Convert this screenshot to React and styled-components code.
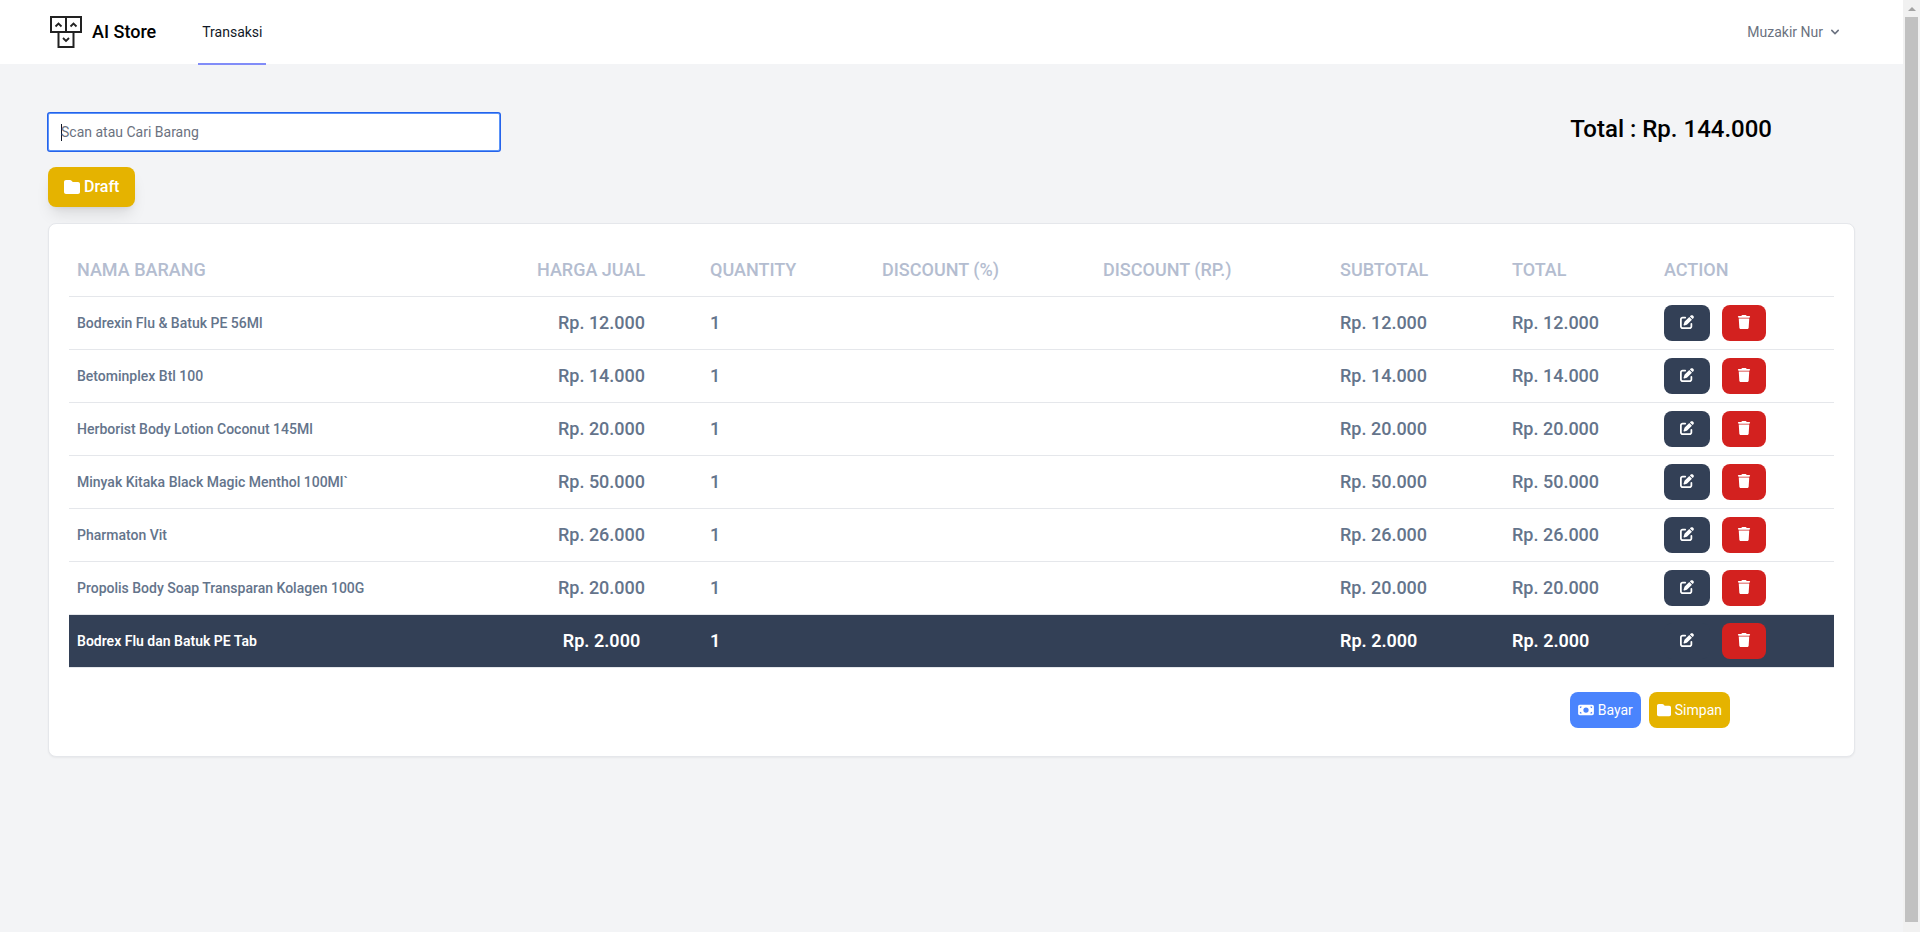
import React, { useState } from "react";
import styled, { createGlobalStyle, css } from "styled-components";
import { FaFolder, FaMoneyBill, FaPenToSquare, FaTrash } from "react-icons/fa6";

const items = [
  { name: "Bodrexin Flu & Batuk PE 56Ml", price: "12.000", qty: 1 },
  { name: "Betominplex Btl 100", price: "14.000", qty: 1 },
  { name: "Herborist Body Lotion Coconut 145Ml", price: "20.000", qty: 1 },
  { name: "Minyak Kitaka Black Magic Menthol 100Ml`", price: "50.000", qty: 1 },
  { name: "Pharmaton Vit", price: "26.000", qty: 1 },
  { name: "Propolis Body Soap Transparan Kolagen 100G", price: "20.000", qty: 1 },
  { name: "Bodrex Flu dan Batuk PE Tab", price: "2.000", qty: 1, active: true },
];

const columns = [
  { label: "Nama Barang", width: 460 },
  { label: "Harga Jual", width: 173 },
  { label: "Quantity", width: 172 },
  { label: "Discount (%)", width: 221 },
  { label: "Discount (Rp.)", width: 237 },
  { label: "Subtotal", width: 172 },
  { label: "Total", width: 152 },
  { label: "Action", width: 178 },
];

const Logo = () => (
  <svg width="36" height="36" viewBox="0 0 36 36" fill="none" stroke="#222" strokeWidth="2">
    <path d="M3 3h30v15H3zM18 3v15M10.5 18h15v15h-15z" />
    <path d="M7.5 12.5l3-3 3 3M22.5 12.5l3-3 3 3M15 24l3 3 3-3" strokeWidth="1.8" />
  </svg>
);

const Chevron = () => (
  <svg width="16" height="16" viewBox="0 0 20 20" fill="currentColor">
    <path
      fillRule="evenodd"
      d="M5.293 7.293a1 1 0 011.414 0L10 10.586l3.293-3.293a1 1 0 111.414 1.414l-4 4a1 1 0 01-1.414 0l-4-4a1 1 0 010-1.414z"
    />
  </svg>
);

const App = () => {
  const [keyword, setKeyword] = useState("");
  return (
    <Shell>
      <GlobalStyle />
      <Page>
        {/* navbar */}
        <Navbar>
          <Brand href="#">
            <Logo />
            AI Store
          </Brand>
          <NavLink href="#transaksi">Transaksi</NavLink>
          <UserButton type="button">
            Muzakir Nur
            <Chevron />
          </UserButton>
        </Navbar>
        <Main>
          {/* search and total */}
          <TopRow>
            <SearchInput
              type="text"
              aria-label="Scan atau Cari Barang"
              placeholder="Scan atau Cari Barang"
              value={keyword}
              onChange={(e) => setKeyword(e.target.value)}
              autoFocus
            />
            <GrandTotal>Total : Rp. 144.000</GrandTotal>
          </TopRow>
          <DraftButton type="button">
            <FaFolder />
            Draft
          </DraftButton>
          {/* cart */}
          <Card>
            <Table>
              <thead>
                <tr>
                  {columns.map((col) => (
                    <HeadCell key={col.label} $width={col.width}>
                      {col.label}
                    </HeadCell>
                  ))}
                </tr>
              </thead>
              <tbody>
                {items.map((item) => (
                  <Row key={item.name} $active={item.active}>
                    <NameCell>{item.name}</NameCell>
                    <PriceCell>Rp. {item.price}</PriceCell>
                    <Cell>{item.qty}</Cell>
                    <Cell />
                    <Cell />
                    <Cell>Rp. {item.price}</Cell>
                    <Cell>Rp. {item.price}</Cell>
                    <Cell>
                      <Actions>
                        <EditButton type="button" aria-label="Edit">
                          <FaPenToSquare />
                        </EditButton>
                        <DeleteButton type="button" aria-label="Hapus">
                          <FaTrash />
                        </DeleteButton>
                      </Actions>
                    </Cell>
                  </Row>
                ))}
              </tbody>
            </Table>
            <CardFooter>
              <FooterButton type="button" $color="#4a84fd">
                <MoneyIcon />
                Bayar
              </FooterButton>
              <FooterButton type="button" $color="#e5b300">
                <FaFolder />
                Simpan
              </FooterButton>
            </CardFooter>
          </Card>
        </Main>
      </Page>
      <ScrollTrack>
        <ScrollArrow />
        <ScrollThumb />
      </ScrollTrack>
    </Shell>
  );
};

const GlobalStyle = createGlobalStyle`
  * {
    box-sizing: border-box;
  }
  body {
    margin: 0;
    background: #f3f4f6;
    font-family: Roboto, "Liberation Sans", sans-serif;
    font-size: 14px;
    line-height: 20px;
  }
  button, input {
    font: inherit;
  }
  svg {
    display: block;
    flex-shrink: 0;
  }
`;
const Shell = styled.div`
  display: grid;
  grid-template-columns: minmax(0, 1fr) 17px;
  min-height: 100vh;
`;
const Page = styled.div`
  background: #f3f4f6;
`;
const Navbar = styled.nav`
  display: flex;
  align-items: center;
  height: 65px;
  padding: 0 48px;
  background: white;
  border-bottom: 1px solid #f3f4f6;
`;
const Brand = styled.a`
  display: flex;
  align-items: center;
  gap: 8px;
  color: black;
  font-size: 18px;
  font-weight: 500;
  text-decoration: none;
`;
const NavLink = styled.a`
  display: flex;
  align-items: center;
  height: 65px;
  margin: 0 0 -1px 42px;
  padding: 0 4px;
  border-bottom: 2px solid #818cf8;
  color: #111827;
  text-decoration: none;
`;
const UserButton = styled.button`
  display: flex;
  align-items: center;
  gap: 4px;
  margin-left: auto;
  padding: 8px 12px;
  border: none;
  background: white;
  color: #6b7280;
  cursor: pointer;
`;
const Main = styled.main`
  padding: 48px;
`;
const TopRow = styled.div`
  display: flex;
  justify-content: space-between;
  margin-bottom: 16px;
  padding-right: 83px;
`;
const SearchInput = styled.input`
  width: 452px;
  height: 38px;
  padding: 8px 12px;
  border: 1px solid #5b93f8;
  border-radius: 2px;
  outline: none;
  box-shadow: 0 0 0 1px #2563eb;
  background: white;
  color: #334155;
  &::placeholder {
    color: #6b7280;
    opacity: 1;
  }
  /* steady caret while the box is empty */
  &:focus:placeholder-shown {
    caret-color: transparent;
    background: linear-gradient(#111827, #111827) 12px center / 1px 17px no-repeat white;
  }
`;
const GrandTotal = styled.h1`
  margin: 0;
  font-size: 24px;
  font-weight: 500;
  line-height: 32px;
`;
const buttonBase = css`
  display: flex;
  align-items: center;
  border: none;
  border-radius: 8px;
  color: white;
  cursor: pointer;
`;
const DraftButton = styled.button`
  ${buttonBase}
  gap: 4px;
  height: 40px;
  padding: 0 16px;
  background: #e5b300;
  box-shadow: 0 10px 15px -3px rgba(0, 0, 0, 0.1), 0 4px 6px -4px rgba(0, 0, 0, 0.1);
  font-size: 16px;
  font-weight: 500;
`;
const Card = styled.section`
  margin-top: 16px;
  padding: 20px 20px 28px;
  border: 1px solid #e5e7eb;
  border-radius: 8px;
  background: white;
  box-shadow: 0 1px 2px rgba(0, 0, 0, 0.05);
`;
const Table = styled.table`
  width: 100%;
  table-layout: fixed;
  border-spacing: 0;
  color: #64748b;
  font-size: 18px;
  font-weight: 500;
`;
const HeadCell = styled.th`
  width: ${(props) => props.$width}px;
  height: 53px;
  padding: 0 8px;
  border-bottom: 1px solid #e5e7eb;
  color: #b4bdd0;
  font-weight: 500;
  text-align: left;
  text-transform: uppercase;
`;
const Row = styled.tr`
  ${(props) =>
    props.$active &&
    css`
      background: #334056;
      color: white;
      font-weight: 600;
    `}
`;
const Cell = styled.td`
  height: 53px;
  padding: 0 8px;
  border-bottom: 1px solid #e5e7eb;
`;
const NameCell = styled(Cell)`
  font-size: 14px;
`;
const PriceCell = styled(Cell)`
  padding-right: 36px;
  text-align: center;
`;
const Actions = styled.div`
  display: flex;
  gap: 12px;
`;
const EditButton = styled.button`
  ${buttonBase}
  height: 36px;
  padding: 0 16px 2px;
  background: #334056;
  font-size: 14px;
`;
const DeleteButton = styled(EditButton)`
  padding: 0 15px 2px;
  background: #d3211f;
`;
const CardFooter = styled.div`
  display: flex;
  justify-content: flex-end;
  gap: 8px;
  margin-top: 24px;
  padding-right: 104px;
`;
const FooterButton = styled.button`
  ${buttonBase}
  gap: 4px;
  height: 36px;
  padding: 0 8px;
  background: ${(props) => props.$color};
  font-size: 14px;
`;
const MoneyIcon = styled(FaMoneyBill)`
  width: 16px;
`;
const ScrollTrack = styled.div`
  display: flex;
  flex-direction: column;
  align-items: center;
  padding-bottom: 10px;
  background: #f1f1f1;
`;
const ScrollArrow = styled.span`
  margin: 7px 0 6px;
  border: 4px solid transparent;
  border-top: none;
  border-bottom-color: #a3a3a3;
`;
const ScrollThumb = styled.span`
  flex: 1;
  width: 13px;
  background: #c1c1c1;
`;
export default App;
